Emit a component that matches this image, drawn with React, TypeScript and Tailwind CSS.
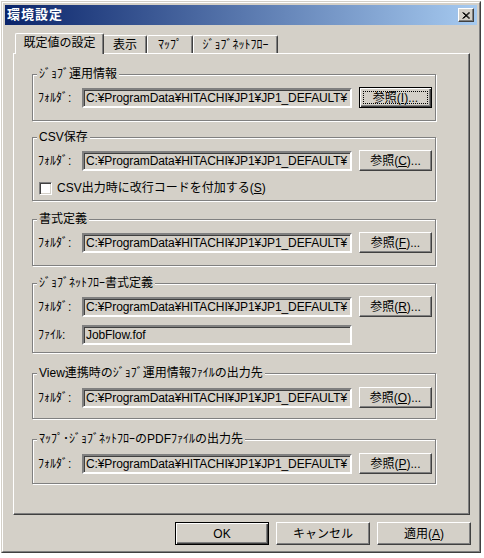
import React from "react";

const PATH = "C:¥ProgramData¥HITACHI¥JP1¥JP1_DEFAULT¥";

function Mn({ pre, k, post }: { pre: string; k: string; post: string }) {
  return (
    <span className="whitespace-nowrap">
      {pre}
      <span className="underline underline-offset-[1px]">{k}</span>
      {post}
    </span>
  );
}

function Btn({
  children,
  focused,
  isDefault,
  className,
}: {
  children: React.ReactNode;
  focused?: boolean;
  isDefault?: boolean;
  className?: string;
}) {
  if (focused || isDefault) {
    return (
      <div
        className={`relative flex items-center justify-center border border-black bg-[#d4d0c8] leading-[14px] shadow-[inset_1px_1px_#fff,inset_-1px_-1px_#404040,inset_-2px_-2px_#808080] ${className ?? ""}`}
      >
        {focused && <span className="absolute inset-[3px] border border-dotted border-black" />}
        {children}
      </div>
    );
  }
  return (
    <div
      className={`flex items-center justify-center border border-t-white border-l-white border-r-[#404040] border-b-[#404040] bg-[#d4d0c8] leading-[14px] shadow-[inset_-1px_-1px_#808080] ${className ?? ""}`}
    >
      {children}
    </div>
  );
}

function Field({ value }: { value: string }) {
  return (
    <div className="h-[20px] w-[270px] overflow-hidden whitespace-nowrap border-2 border-t-[#808080] border-l-[#808080] border-r-white border-b-white bg-[#d4d0c8] px-[2px] leading-[16px] tracking-[-0.1px] shadow-[inset_1px_1px_#404040,inset_-1px_-1px_#d4d0c8]">
      {value}
    </div>
  );
}

function GroupBox({
  title,
  className,
  children,
}: {
  title: string;
  className?: string;
  children: React.ReactNode;
}) {
  return (
    <div
      className={`relative w-[404px] border border-[#808080] shadow-[inset_1px_1px_#fff,1px_1px_#fff] ${className ?? ""}`}
    >
      <span className="absolute left-[4px] top-[-8px] whitespace-nowrap bg-[#d4d0c8] px-[2px] leading-[14px]">
        {title}
      </span>
      {children}
    </div>
  );
}

function FolderRow({ mn, focused }: { mn: string; focused?: boolean }) {
  return (
    <div className="flex h-[21px] items-center">
      <span className="w-[49px] pl-[5px] leading-[14px]">ﾌｫﾙﾀﾞ:</span>
      <Field value={PATH} />
      <Btn focused={focused} className="ml-[7px] h-[21px] w-[73px]">
        <Mn pre="参照(" k={mn} post=")..." />
      </Btn>
    </div>
  );
}

export default function App() {
  return (
    <div className="h-[558px] w-[484px] bg-white pl-[1px] pt-[1px] font-['Liberation_Sans','Noto_Sans_CJK_JP',sans-serif] text-[12px] text-black">
      <div className="h-[552px] w-[480px] border border-t-[#d4d0c8] border-l-[#d4d0c8] border-r-[#404040] border-b-[#404040] bg-[#d4d0c8]">
        <div className="flex h-full flex-col border border-t-white border-l-white border-r-[#808080] border-b-[#808080] p-[2px]">
          {/* Title bar */}
          <div className="flex h-[20px] items-center justify-between bg-[linear-gradient(to_right,#0a246a,#a6caf0)] pl-[2px] pr-[3px]">
            <span className="text-[13px] font-bold leading-[16px] tracking-[1px] text-white">環境設定</span>
            <div className="flex h-[14px] w-[16px] items-center justify-center border border-t-white border-l-white border-r-[#404040] border-b-[#404040] bg-[#d4d0c8] shadow-[inset_-1px_-1px_#808080]">
              <svg width="8" height="7" viewBox="0 0 8 7">
                <path d="M0.5 0.5 L7 6.5 M1.5 0.5 L8 6.5 M7 0.5 L0.5 6.5 M8 0.5 L1.5 6.5" stroke="#000" strokeWidth="1" />
              </svg>
            </div>
          </div>

          {/* Tabs + panel */}
          <div className="mt-[8px] pl-[8px]">
            <div className="w-[457px]">
              <div className="flex h-[20px] items-end pl-[2px]">
                <div className="relative z-10 -mb-[1px] flex h-[21px] w-[89px] items-center justify-center rounded-tl-[2px] rounded-tr-[2px] border-t border-l border-r border-t-white border-l-white border-r-[#404040] bg-[#d4d0c8] pb-[2px] leading-[14px] shadow-[inset_-1px_0_#808080]">
                  既定値の設定
                </div>
                <div className="flex h-[18px] w-[43px] items-center justify-center rounded-tr-[2px] border-t border-r border-t-white border-r-[#404040] leading-[14px] shadow-[inset_-1px_0_#808080]">
                  表示
                </div>
                <div className="flex h-[18px] w-[46px] items-center justify-center rounded-tl-[2px] rounded-tr-[2px] border-t border-l border-r border-t-white border-l-white border-r-[#404040] leading-[14px] shadow-[inset_-1px_0_#808080]">
                  ﾏｯﾌﾟ
                </div>
                <div className="flex h-[18px] w-[85px] items-center justify-center rounded-tl-[2px] rounded-tr-[2px] border-t border-l border-r border-t-white border-l-white border-r-[#404040] leading-[14px] shadow-[inset_-1px_0_#808080]">
                  ｼﾞｮﾌﾞﾈｯﾄﾌﾛｰ
                </div>
              </div>

              <div className="h-[462px] border border-t-white border-l-white border-r-[#404040] border-b-[#404040] pl-[18px] pt-[20px] shadow-[inset_-1px_-1px_#808080]">
                <GroupBox title="ｼﾞｮﾌﾞ運用情報" className="pt-[12px] pb-[12px]">
                  <FolderRow mn="I" focused />
                </GroupBox>

                <GroupBox title="CSV保存" className="mt-[16px] pt-[12px] pb-[4px]">
                  <FolderRow mn="C" />
                  <div className="mt-[9px] flex h-[16px] items-center pl-[6px]">
                    <span className="h-[13px] w-[13px] border border-t-[#808080] border-l-[#808080] border-r-white border-b-white bg-white shadow-[inset_1px_1px_#404040,inset_-1px_-1px_#d4d0c8]" />
                    <span className="ml-[5px] leading-[14px]">
                      <Mn pre="CSV出力時に改行コードを付加する(" k="S" post=")" />
                    </span>
                  </div>
                </GroupBox>

                <GroupBox title="書式定義" className="mt-[18px] pt-[12px] pb-[12px]">
                  <FolderRow mn="F" />
                </GroupBox>

                <GroupBox title="ｼﾞｮﾌﾞﾈｯﾄﾌﾛｰ書式定義" className="mt-[17px] pt-[12px] pb-[7px]">
                  <FolderRow mn="R" />
                  <div className="mt-[7px] flex h-[21px] items-center">
                    <span className="w-[49px] pl-[5px] leading-[14px]">ﾌｧｲﾙ:</span>
                    <Field value="JobFlow.fof" />
                  </div>
                </GroupBox>

                <GroupBox title="View連携時のｼﾞｮﾌﾞ運用情報ﾌｧｲﾙの出力先" className="mt-[20px] pt-[13px] pb-[10px]">
                  <FolderRow mn="O" />
                </GroupBox>

                <GroupBox title="ﾏｯﾌﾟ･ｼﾞｮﾌﾞﾈｯﾄﾌﾛｰのPDFﾌｧｲﾙの出力先" className="mt-[20px] pt-[13px] pb-[9px]">
                  <FolderRow mn="P" />
                </GroupBox>
              </div>
            </div>
          </div>

          {/* Bottom buttons */}
          <div className="mt-[7px] flex justify-end gap-[7px] pr-[6px]">
            <Btn isDefault className="h-[23px] w-[94px]">OK</Btn>
            <Btn className="h-[23px] w-[94px]">キャンセル</Btn>
            <Btn className="h-[23px] w-[94px]">
              <Mn pre="適用(" k="A" post=")" />
            </Btn>
          </div>
        </div>
      </div>
    </div>
  );
}
